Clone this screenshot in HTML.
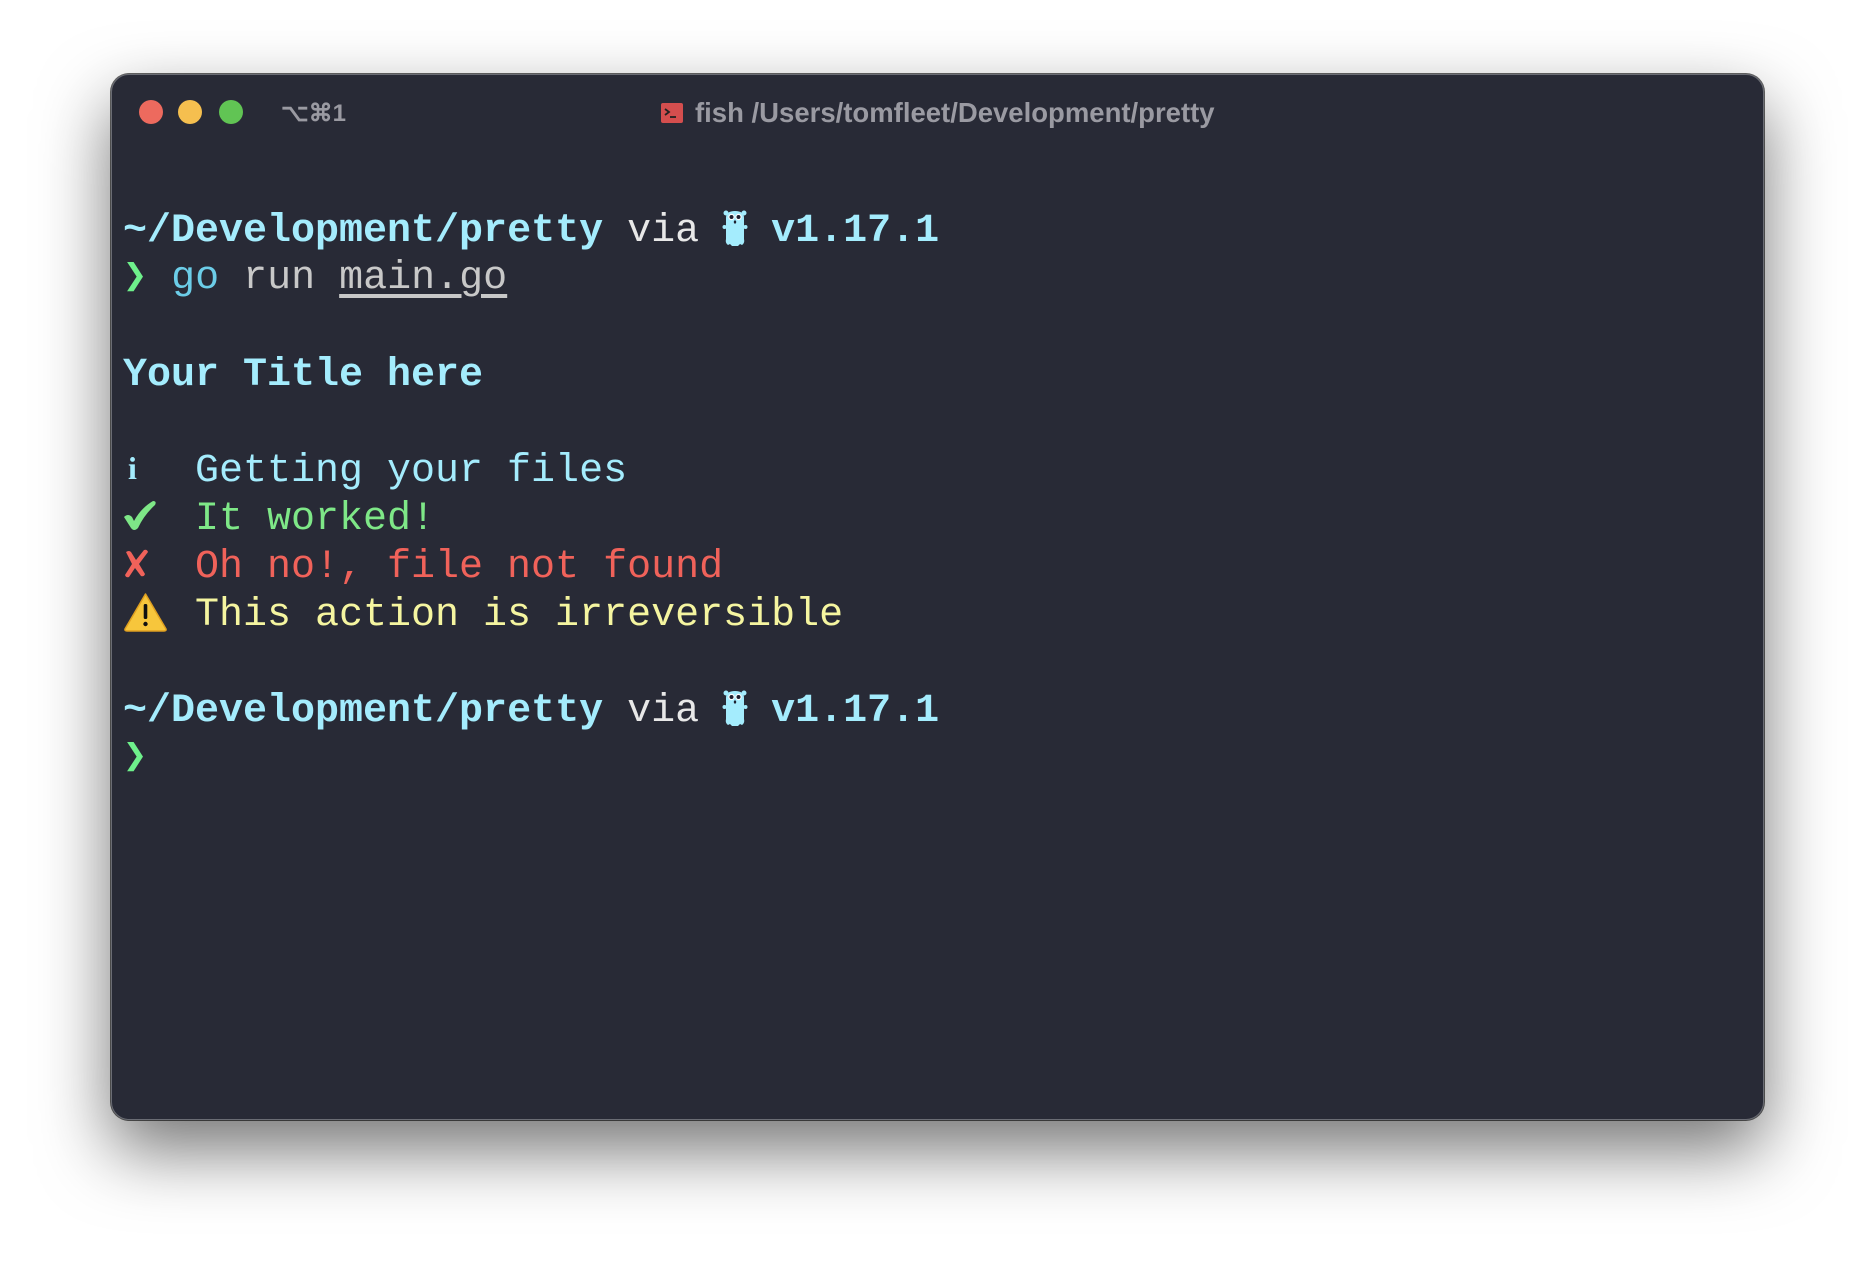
<!DOCTYPE html>
<html><head><meta charset="utf-8"><style>
html,body{margin:0;padding:0;width:1876px;height:1268px;background:#fff;overflow:hidden}
.win{position:absolute;left:111px;top:74px;width:1651px;height:1044px;background:#282a36;border:1px solid #6a6c74;border-radius:18px;box-shadow:0 30px 70px rgba(0,0,0,0.55),0 0 0 1px rgba(0,0,0,0.6)}
.dot{position:absolute;top:100px;width:24px;height:24px;border-radius:50%}
.tb{position:absolute;font:bold 27.5px "Liberation Sans",sans-serif;color:#9a9aa2;white-space:nowrap}
.row{position:absolute;left:123px;height:48px;line-height:48px;font:40px "Liberation Mono",monospace;white-space:pre;color:#c8c8c8}
.b{font-weight:bold}
.cy{color:#a4ecfd}
.gr{color:#6ef08b}
</style></head><body>
<div class="win"></div>
<div class="dot" style="left:139px;background:#ed6a5e"></div>
<div class="dot" style="left:178px;background:#f5bf4f"></div>
<div class="dot" style="left:219px;background:#61c454"></div>
<div class="tb" style="left:281px;top:99px;font-size:24px">⌥⌘1</div>
<svg style="position:absolute;left:661px;top:103px" width="22" height="20" viewBox="0 0 22 20"><rect width="22" height="20" rx="2" fill="#d44e4e"/><path d="M4 6l4 3-4 3" stroke="#222" stroke-width="1.8" fill="none"/><path d="M9 14h6" stroke="#222" stroke-width="1.8"/></svg>
<div class="tb" style="left:695px;top:97px">fish /Users/tomfleet/Development/pretty</div>

<svg width="0" height="0" style="position:absolute"><defs>
<g id="gopher"><path d="M4 9 Q4 2 13 2 Q22 2 22 9 L22 30 Q23 34 20 36 L18 35 L16 37 L10 37 L8 35 L6 36 Q3 34 4 30 Z" fill="#a4ecfd"/><circle cx="2.5" cy="18" r="2" fill="#a4ecfd"/><circle cx="23.5" cy="18" r="2" fill="#a4ecfd"/><circle cx="4" cy="4" r="2.5" fill="#a4ecfd"/><circle cx="22" cy="4" r="2.5" fill="#a4ecfd"/><circle cx="9.5" cy="8" r="3.2" fill="#fff"/><circle cx="16.5" cy="8" r="3.2" fill="#fff"/><circle cx="9.5" cy="8" r="2" fill="#1e2030"/><circle cx="16.5" cy="8" r="2" fill="#1e2030"/><ellipse cx="13" cy="13" rx="1.2" ry="1.6" fill="#1e2030"/></g>
</defs></svg>

<div class="row" style="top:209px"><span class="cy b">~/Development/pretty</span> <span style="color:#e8e8e8">via</span>   <span class="cy b">v1.17.1</span></div>
<svg style="position:absolute;left:722px;top:209px" width="26" height="38" viewBox="0 0 26 38"><use href="#gopher"/></svg>
<div class="row" style="top:252px"><span class="gr b">❯</span> <span style="color:#6ccde8">go</span> run <span style="text-decoration:underline;text-underline-offset:6px">main.go</span></div>
<div class="row cy b" style="top:353px">Your Title here</div>
<div style="position:absolute;left:128px;top:452px;font:bold 32px 'Liberation Serif',serif;color:#a4ecfd;line-height:32px">i</div>
<div class="row cy" style="top:449px;left:195px">Getting your files</div>
<svg style="position:absolute;left:123px;top:501px" width="34" height="30" viewBox="0 0 34 30"><path d="M1 16 Q5 12 9 16 L11 20 Q18 7 30 0 Q34 0 32 4 Q21 14 15 27 Q11 31 8 27 Z" fill="#7ee787"/></svg>
<div class="row" style="top:497px;left:195px;color:#7ee787">It worked!</div>
<svg style="position:absolute;left:123px;top:549px" width="28" height="30" viewBox="0 0 28 30"><path d="M3 3 Q6 1 8 3 L13 11 L21 1 Q24 0 25 3 L16 15 L22 25 Q21 28 18 27 L12 19 L6 28 Q3 29 2 26 L9 15 Z" fill="#f0625a"/></svg>
<div class="row" style="top:545px;left:195px;color:#f0625a">Oh no!, file not found</div>
<div class="row" style="top:593px;left:195px;color:#f5f5a0">This action is irreversible</div>
<svg style="position:absolute;left:123px;top:592px" width="45" height="40" viewBox="0 0 45 40"><path d="M22.5 2 L43 37 Q43.5 39 41 39 L4 39 Q1.5 39 2 37 Z" fill="#f7c63c" stroke="#e0a020" stroke-width="1.5" stroke-linejoin="round"/><rect x="20.7" y="12" width="3.6" height="15" rx="1.5" fill="#111"/><circle cx="22.5" cy="32" r="2.2" fill="#111"/></svg>
<div class="row" style="top:689px"><span class="cy b">~/Development/pretty</span> <span style="color:#e8e8e8">via</span>   <span class="cy b">v1.17.1</span></div>
<svg style="position:absolute;left:722px;top:689px" width="26" height="38" viewBox="0 0 26 38"><use href="#gopher"/></svg>
<div class="row" style="top:732px"><span class="gr b">❯</span></div>
</body></html>
